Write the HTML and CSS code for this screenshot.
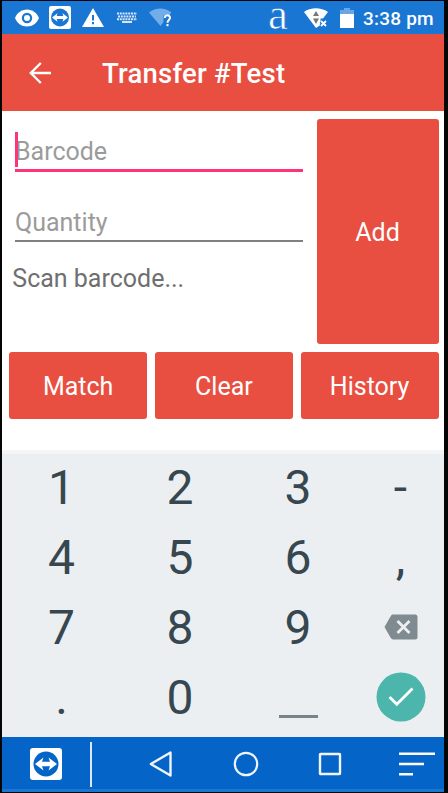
FILE: index.html
```html
<!DOCTYPE html>
<html lang="en">
<head>
<meta charset="utf-8">
<title>Transfer #Test</title>
<link rel="stylesheet" href="styles.css">
</head>
<body>
<div class="screen">
  <header class="status">
    <svg class="eye" width="24" height="18" viewBox="0 0 24 18"><path fill="#fff" fill-rule="evenodd" d="M12 .5C6.500.5 2 4 0 9c2 5 6.500 8.500 12 8.500S22 14 24 9C22 4 17.500.5 12 .5zM12 3.800a5.200 5.200 0 1 1 0 10.400a5.200 5.200 0 0 1 0-10.400z"/><circle cx="12" cy="9" r="3" fill="#fff"/></svg>
    <svg class="remote" width="22" height="23" viewBox="0 0 22 23"><rect width="22" height="23" rx="2" fill="#fff"/><circle cx="11" cy="11.500" r="9" fill="#1976d2"/><path fill="#fff" d="M3 11.500l5.500-4.300-.8 2.900h6.600l-.8-2.900L19 11.500l-5.500 4.300.8-2.900H7.700l.8 2.900z"/></svg>
    <svg class="warning" width="22" height="19" viewBox="0 0 22 19"><path fill="#fff" d="M11 0l11 19H0z"/><path fill="#1976d2" d="M10 7h2v5.500h-2zM10 14h2v2.200h-2z"/></svg>
    <svg class="keys" width="20" height="11" viewBox="0 0 20 11"><g fill="none" stroke="#d5e6f8" stroke-width="2"><path stroke-dasharray="2 .8" d="M0 1.500h20M1 4.500h18M0 7.300h20"/><path d="M5 10h10"/></g></svg>
    <svg class="nowifi" width="24" height="20" viewBox="0 0 24 20"><path fill="#73ade9" d="M0 4.500C6.500-.9 16-.9 22.500 4.500L20 7.500h-5.500v6.500L11.500 18z"/><path fill="none" stroke="#fff" stroke-width="2" d="M15.800 10c0-3.500 5.200-3.400 5.200-.3 0 2.300-2.500 2.300-2.500 5M18.500 16v2.200"/></svg>
    <span class="letter">a</span>
    <svg class="wifi" width="24" height="20" viewBox="0 0 24 20"><path fill="#fff" d="M0 4C6.500-1 17-1 24 4l-5 6.500h-2.500V17L12 20z"/><path fill="#777" d="M12 3l3 5H9zM9 10.500h6L12 16z"/><path fill="none" stroke="#1976d2" stroke-width="4" d="M17 13l5 5m0-5l-5 5"/><path fill="none" stroke="#fff" stroke-width="1.800" d="M17 13l5 5m0-5l-5 5"/></svg>
    <svg class="battery" width="14" height="20" viewBox="0 0 14 20"><path fill="#68a7e6" d="M4 0h6v2h4v5H0V2h4z"/><path fill="#fff" d="M0 6h14v14H0z"/></svg>
    <span class="time">3:38 pm</span>
  </header>
  <div class="appbar">
    <svg class="back" width="24" height="24" viewBox="0 0 24 24"><path fill="none" stroke="#fff" stroke-width="2.400" d="M23 12H3M12.800 2L2.800 12l10 10"/></svg>
    <h1 class="title">Transfer #Test</h1>
  </div>
  <main class="content">
    <div class="form">
      <div class="fields">
        <div class="field focused"><i class="caret"></i><span>Barcode</span></div>
        <div class="field quantity"><span>Quantity</span></div>
        <p class="hint">Scan barcode...</p>
      </div>
      <button class="button">Add</button>
    </div>
    <div class="actions">
      <button class="button">Match</button>
      <button class="button">Clear</button>
      <button class="button">History</button>
    </div>
  </main>
  <div class="keyboard">
    <span>1</span><span>2</span><span>3</span><span>-</span>
    <span>4</span><span>5</span><span>6</span><span>,</span>
    <span>7</span><span>8</span><span>9</span>
    <span><svg width="34" height="26" viewBox="0 0 34 26"><path fill="#7f8b90" d="M9 .5h22q2.500 0 2.500 2.500v20q0 2.500-2.500 2.500H9q-1.300 0-2.200-1.400L.5 13 6.800 1.900Q7.700.5 9 .5z"/><path fill="none" stroke="#eceff1" stroke-width="2.800" d="M13.500 7l12 12m0-12l-12 12"/></svg></span>
    <span>.</span><span>0</span><span><i class="space"></i></span>
    <span><svg width="50" height="50" viewBox="0 0 50 50"><circle cx="25" cy="25" r="24.500" fill="#4db6ac"/><path fill="none" stroke="#fff" stroke-width="2.800" d="M13.500 25l7.300 7.300L36.500 16.500"/></svg></span>
  </div>
  <nav class="navbar">
    <svg class="nav-remote" width="32" height="32" viewBox="0 0 32 32"><rect width="32" height="32" rx="3" fill="#fff"/><circle cx="16" cy="16" r="12.500" fill="#0564c8"/><path fill="#fff" d="M5 16l8.500-6.500-1.500 4.300h8l-1.500-4.300L27 16l-8.500 6.500 1.500-4.300h-8l1.500 4.300z"/></svg>
    <i class="divider"></i>
    <svg class="nav-back" width="24" height="28" viewBox="0 0 24 28"><path fill="none" stroke="#f0f5fc" stroke-width="2.400" stroke-linejoin="round" d="M21.500 2.500v23L1.800 14z"/></svg>
    <svg class="nav-home" width="26" height="26" viewBox="0 0 26 26"><circle cx="13" cy="13" r="11.200" fill="none" stroke="#f0f5fc" stroke-width="2.200"/></svg>
    <svg class="nav-recent" width="24" height="24" viewBox="0 0 24 24"><rect x="2" y="2" width="20" height="20" rx=".5" fill="none" stroke="#f0f5fc" stroke-width="2.400"/></svg>
    <svg class="nav-menu" width="36" height="24" viewBox="0 0 36 24"><path fill="none" stroke="#fff" stroke-width="2.600" d="M0 1.700h36M0 12h25M0 22.200h14"/></svg>
  </nav>
</div>
</body>
</html>
```

FILE: styles.css
```css
* { box-sizing: border-box; }
body { margin: 0; background: #000; font-family: Roboto, sans-serif; }
.screen {
  display: flex;
  flex-direction: column;
  width: 448px;
  height: 793px;
  border: solid #050505;
  border-width: 1px 4px 1px 2px;
  background: #fff;
}
svg { display: block; flex: none; }

.status { display: flex; align-items: center; height: 33px; background: #1976d2; color: #fff; white-space: nowrap; }
.eye { margin-left: 13px; }
.remote { margin-left: 10px; }
.warning { margin-left: 11px; }
.keys { margin-left: 13px; }
.nowifi { margin-left: 12px; }
.letter {
  width: 21px;
  margin-left: 95px;
  padding-bottom: 7px;
  font: 45px/33px "Liberation Serif", serif;
  -webkit-text-stroke: .7px #1976d2;
}
.wifi { margin-left: 15px; }
.battery { margin-left: 12px; }
.time { margin: 2px 0 0 9px; font-size: 19px; font-weight: 500; letter-spacing: .2px; }

.appbar { display: flex; align-items: center; height: 77px; background: #e84f40; color: #fff; }
.back { margin-left: 26px; }
.title { margin: 2px 0 0 50px; font-size: 27.500px; font-weight: 500; line-height: 32px; letter-spacing: .23px; white-space: nowrap; }

.content { height: 339px; padding: 8px 5.500px 0 7.300px; }
.form { display: flex; justify-content: space-between; height: 225px; }
.fields { width: 294px; }
.field { position: relative; width: 288px; margin-left: 5.700px; font-size: 25px; line-height: 30px; color: #9b9b9b; }
.focused { height: 53px; padding-top: 18px; border-bottom: 3px solid #ff3377; }
.caret { position: absolute; left: 0; top: 13px; width: 3px; height: 35px; background: #ff3377; }
.quantity { height: 70px; padding-top: 36px; border-bottom: 2px solid #808080; }
.hint { margin: 22px 0 0 3px; font-size: 25px; line-height: 30px; color: #6f6f6f; }
.button { width: 122px; padding: 2px 0 0; border: 0; border-radius: 3px; background: #e84f40; color: #fff; font: 25px/30px Roboto, sans-serif; }
.actions { display: grid; grid-template-columns: repeat(3, 1fr); gap: 8px; height: 67px; margin-top: 8px; }
.actions .button { width: 100%; }

.keyboard {
  display: grid;
  grid-template: repeat(4, 70px) / 119px 118px 118px 87px;
  height: 287px;
  padding-top: 2px;
  background: linear-gradient(#f3f5f6 4px, #eceff1 4px);
  color: #37474f;
  font-size: 48px;
}
.keyboard span { display: flex; align-items: center; justify-content: center; }
.space { width: 39px; height: 3px; margin-top: 38px; background: #77858a; }

.navbar { display: flex; align-items: center; height: 55px; padding-top: 2px; border-bottom: 3px solid #1976d2; background: #0564c8; }
.nav-remote { margin-left: 28px; }
.divider { width: 2px; height: 45px; margin-left: 28px; background: #dce9f7; }
.nav-back { margin-left: 57px; }
.nav-home { margin-left: 59.500px; }
.nav-recent { margin-left: 59px; }
.nav-menu { margin-left: 57.500px; }
```
